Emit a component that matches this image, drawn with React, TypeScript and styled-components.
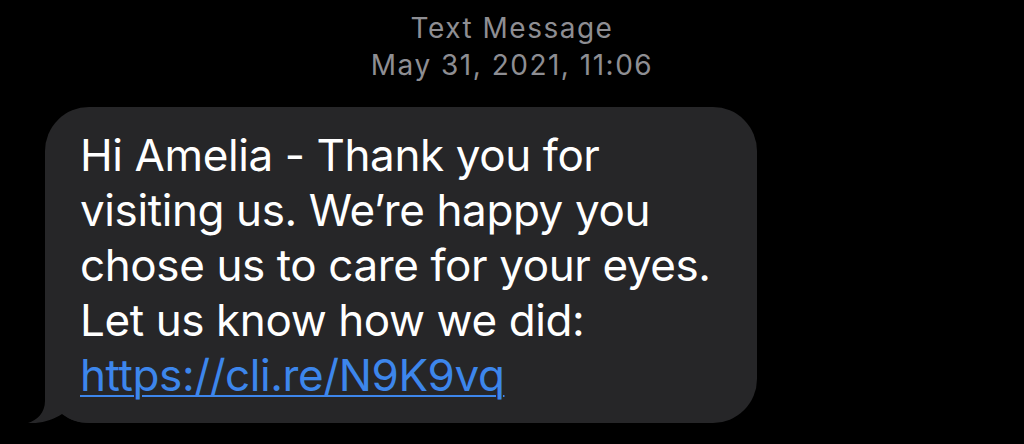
import React from 'react';
import styled, { createGlobalStyle } from 'styled-components';

const GlobalStyle = createGlobalStyle`
  html, body {
    margin: 0;
    padding: 0;
    background: #000000;
  }
  body {
    font-family: 'Inter', 'Liberation Sans', sans-serif;
    -webkit-font-smoothing: antialiased;
  }
`;

const Screen = styled.div`
  width: 1024px;
  height: 444px;
  background: #000000;
  overflow: hidden;
  display: flex;
  flex-direction: column;
`;

const Header = styled.header`
  display: flex;
  flex-direction: column;
  align-items: center;
  padding-top: 10px;
  color: #8e8e93;
  font-size: 28px;
  line-height: 37px;
  letter-spacing: 1.5px;
  font-weight: 400;
`;

const Thread = styled.div`
  display: flex;
  padding: 23px 0 0 45px;
`;

const Bubble = styled.div`
  position: relative;
  width: 712px;
  box-sizing: border-box;
  padding: 21px 35px 20px;
  background: #262628;
  border-radius: 44px;
  color: #ffffff;
  font-size: 44px;
  line-height: 55px;
  letter-spacing: -0.4px;
  white-space: nowrap;
`;

const Tail = styled.svg`
  position: absolute;
  left: -17px;
  bottom: 0;
  width: 62px;
  height: 50px;
  display: block;
  z-index: 0;
`;

const Line = styled.div`
  position: relative;
  z-index: 1;
`;

const Link = styled.a`
  color: #3d86ec;
  text-decoration: underline;
  text-decoration-thickness: 1.5px;
  text-underline-offset: 4px;
`;

const App: React.FC = () => {
  return (
    <Screen>
      <GlobalStyle />
      <Header>
        <span>Text Message</span>
        <span>May 31, 2021, 11:06</span>
      </Header>
      <Thread>
        <Bubble>
          <Tail viewBox="0 0 62 50">
            <path
              d="M17,0 L17,28 C17,40 9,47 0,50 C12,51 25,47 34,41 C42,47 50,50 62,50 L62,0 Z"
              fill="#262628"
            />
          </Tail>
          <Line>Hi Amelia - Thank you for</Line>
          <Line>visiting us. We’re happy you</Line>
          <Line>chose us to care for your eyes.</Line>
          <Line>Let us know how we did:</Line>
          <Line>
            <Link href="#">https://cli.re/N9K9vq</Link>
          </Line>
        </Bubble>
      </Thread>
    </Screen>
  );
};

export default App;
